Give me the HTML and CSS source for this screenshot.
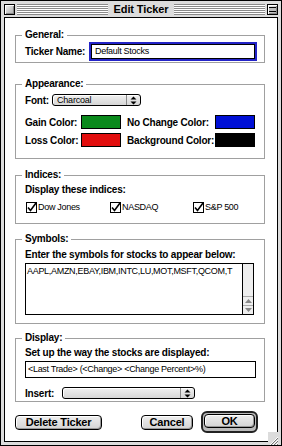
FILE: index.html
```html
<!DOCTYPE html>
<html lang="en">
  <head>
    <meta charset="UTF-8" />
    <title>Edit Ticker</title>
    <link rel="stylesheet" href="styles.css">
  </head>
  <body>
    <div class="window">
      <div class="titlebar">
        <span class="close-box"></span>
        <span class="stripes"></span>
        <span class="title">Edit Ticker</span>
        <span class="stripes"></span>
        <span class="shade-box"><span class="shade-bar"></span></span>
      </div>

      <div class="content">
        <!-- General -->
        <div class="group general">
          <span class="legend">General:</span>
          <div class="name-row">
            <span class="label">Ticker Name:</span>
            <div class="field focused">Default Stocks</div>
          </div>
        </div>

        <!-- Appearance -->
        <div class="group appearance">
          <span class="legend">Appearance:</span>
          <div class="font-row">
            <span class="label">Font:</span>
            <div class="popup font-popup">
              <span class="popup-text">Charcoal</span>
              <span class="popup-arrows">
                <svg width="7" height="9" viewBox="0 0 7 9"><path d="M0.5 3.5 L3.5 0.5 L6.5 3.5Z M0.5 5.5 L3.5 8.5 L6.5 5.5Z" fill="#000"/></svg>
              </span>
            </div>
          </div>
          <div class="color-grid">
            <span class="label">Gain Color:</span>
            <span class="swatch" style="background:#0a8a1c"></span>
            <span class="label">No Change Color:</span>
            <span class="swatch" style="background:#0010d6"></span>
            <span class="label">Loss Color:</span>
            <span class="swatch" style="background:#e20d0d"></span>
            <span class="label">Background Color:</span>
            <span class="swatch" style="background:#000"></span>
          </div>
        </div>

        <!-- Indices -->
        <div class="group indices">
          <span class="legend">Indices:</span>
          <div class="label line">Display these indices:</div>
          <div class="check-row">
            <span class="check"><svg width="11" height="11" viewBox="0 0 11 11"><rect x="0.5" y="0.5" width="10" height="10" fill="#fff" stroke="#000"/><path d="M2 5.5 L4.5 8.5 L10 1" fill="none" stroke="#000" stroke-width="1.6"/></svg>Dow Jones</span>
            <span class="check"><svg width="11" height="11" viewBox="0 0 11 11"><rect x="0.5" y="0.5" width="10" height="10" fill="#fff" stroke="#000"/><path d="M2 5.5 L4.5 8.5 L10 1" fill="none" stroke="#000" stroke-width="1.6"/></svg>NASDAQ</span>
            <span class="check"><svg width="11" height="11" viewBox="0 0 11 11"><rect x="0.5" y="0.5" width="10" height="10" fill="#fff" stroke="#000"/><path d="M2 5.5 L4.5 8.5 L10 1" fill="none" stroke="#000" stroke-width="1.6"/></svg>S&amp;P 500</span>
          </div>
        </div>

        <!-- Symbols -->
        <div class="group symbols">
          <span class="legend">Symbols:</span>
          <div class="label line">Enter the symbols for stocks to appear below:</div>
          <div class="text-area">
            <div class="text-body">AAPL,AMZN,EBAY,IBM,INTC,LU,MOT,MSFT,QCOM,T</div>
            <div class="scrollbar">
              <span class="track"></span>
              <span class="arrow"><svg width="7" height="4" viewBox="0 0 7 4"><path d="M0 4 L3.5 0 L7 4Z" fill="#888"/></svg></span>
              <span class="arrow"><svg width="7" height="4" viewBox="0 0 7 4"><path d="M0 0 L3.5 4 L7 0Z" fill="#888"/></svg></span>
            </div>
          </div>
        </div>

        <!-- Display -->
        <div class="group display">
          <span class="legend">Display:</span>
          <div class="label line">Set up the way the stocks are displayed:</div>
          <div class="field format">&lt;Last Trade&gt; (&lt;Change&gt; &lt;Change Percent&gt;%)</div>
          <div class="insert-row">
            <span class="label">Insert:</span>
            <div class="popup insert-popup">
              <span class="popup-text"></span>
              <span class="popup-arrows">
                <svg width="7" height="9" viewBox="0 0 7 9"><path d="M0.5 3.5 L3.5 0.5 L6.5 3.5Z M0.5 5.5 L3.5 8.5 L6.5 5.5Z" fill="#000"/></svg>
              </span>
            </div>
          </div>
        </div>

        <div class="button-row">
          <button class="btn delete-btn">Delete Ticker</button>
          <button class="btn cancel-btn">Cancel</button>
          <span class="default-ring"><button class="btn ok-btn">OK</button></span>
        </div>
      </div>

      <span class="grow-box">
        <svg width="11" height="11" viewBox="0 0 11 11">
          <path d="M2 10 L10 2 M5 10 L10 5 M8 10 L10 8" stroke="#fff" stroke-width="1"/>
          <path d="M3 10 L10 3 M6 10 L10 6 M9 10 L10 9" stroke="#777" stroke-width="1"/>
        </svg>
      </span>
    </div>
  </body>
</html>
```

FILE: styles.css
```css
body {
  margin: 0;
  padding: 0;
  background-color: #fff;
  font-family: "Liberation Sans", Arial, sans-serif;
  color: #000;
}

.window {
  position: relative;
  width: 282px;
  height: 446px;
  box-sizing: border-box;
  border: 1px solid #000;
  background-color: #dcdcdc;
  display: flex;
  flex-direction: column;
}

/* Title bar */
.titlebar {
  height: 16px;
  display: flex;
  align-items: center;
  padding: 0 3px;
}

.close-box,
.shade-box {
  width: 11px;
  height: 11px;
  box-sizing: border-box;
  border: 1px solid #000;
  background: linear-gradient(135deg, #f4f4f4, #aaa);
  box-shadow: inset 1px 1px #fff, inset -1px -1px #888;
  flex-shrink: 0;
}

.shade-box {
  display: flex;
  align-items: center;
  padding: 0 1px;
}

.shade-bar {
  display: block;
  width: 100%;
  height: 3px;
  border-top: 1px solid #000;
  border-bottom: 1px solid #000;
  background: #bbb;
}

.stripes {
  flex: 1;
  height: 11px;
  margin: 0 2px;
  background: repeating-linear-gradient(#8a8a8a 0 1px, #fff 1px 2px);
}

.title {
  font-size: 11px;
  font-weight: bold;
  letter-spacing: -0.1px;
  padding: 0 4px;
  line-height: 16px;
}

/* Content */
.content {
  flex: 1;
  margin: 0 3px 3px 3px;
  border: 1px solid #000;
  background-color: #fff;
}

.label {
  font-size: 10px;
  font-weight: bold;
  letter-spacing: -0.2px;
  white-space: nowrap;
}

.line {
  height: 12px;
  line-height: 12px;
}

.group {
  position: relative;
  margin: 0 12px 0 10px;
  border: 1px solid #a0a0a0;
}

.legend {
  position: absolute;
  top: -7px;
  left: 6px;
  padding: 0 3px;
  background-color: #fff;
  font-size: 10px;
  font-weight: bold;
  letter-spacing: -0.2px;
  line-height: 12px;
}

.field {
  box-sizing: border-box;
  border: 1px solid #000;
  font-size: 9px;
  letter-spacing: -0.3px;
  padding-left: 3px;
  white-space: nowrap;
}

/* General */
.general {
  margin-top: 17px;
  padding: 6px 7px 1px 9px;
}

.name-row {
  display: flex;
  align-items: center;
  justify-content: space-between;
}

.focused {
  width: 168px;
  height: 19px;
  line-height: 15px;
  border: 2px solid #2424c8;
  box-shadow: inset 0 0 0 1px #000;
  padding-left: 4px;
}

/* Appearance */
.appearance {
  margin-top: 21px;
  padding: 9px 0 11px 9px;
}

.font-row {
  display: flex;
  align-items: center;
  height: 12px;
  margin-bottom: 9px;
}

.popup {
  box-sizing: border-box;
  height: 12px;
  display: flex;
  border: 1px solid #000;
  border-radius: 3px;
  background: linear-gradient(#f0f0f0, #d6d6d6);
  box-shadow: inset 1px 1px #fff;
}

.font-popup {
  width: 89px;
  margin-left: 3px;
}

.popup-text {
  flex: 1;
  font-size: 9px;
  letter-spacing: -0.2px;
  line-height: 10px;
  padding-left: 4px;
}

.popup-arrows {
  width: 13px;
  border-left: 1px solid #888;
  display: flex;
  align-items: center;
  justify-content: center;
}

.color-grid {
  display: grid;
  grid-template-columns: 56px 46px 88px 40px;
  grid-auto-rows: 14px;
  row-gap: 4px;
  align-items: center;
}

.swatch {
  display: block;
  width: 40px;
  height: 14px;
  box-sizing: border-box;
  border: 1px solid #000;
}

/* Indices */
.indices {
  margin-top: 16px;
  padding: 8px 0 10px 9px;
}

.check-row {
  display: grid;
  grid-template-columns: 84px 83px auto;
  margin-top: 5px;
  padding-left: 1px;
  height: 12px;
  align-items: center;
}

.check {
  display: flex;
  align-items: center;
  gap: 1px;
  font-size: 9px;
  letter-spacing: -0.3px;
}

/* Symbols */
.symbols {
  margin-top: 15px;
  padding: 9px 0 8px 9px;
}

.text-area {
  display: flex;
  width: 229px;
  height: 52px;
  margin-top: 2px;
  box-sizing: border-box;
  border: 1px solid #000;
}

.text-body {
  flex: 1;
  font-size: 9px;
  letter-spacing: -0.3px;
  padding: 2px 0 0 1px;
  white-space: nowrap;
  overflow: hidden;
}

.scrollbar {
  width: 10px;
  border-left: 1px solid #000;
  display: flex;
  flex-direction: column;
  background-color: #eee;
}

.track {
  flex: 1;
}

.arrow {
  height: 8px;
  border-top: 1px solid #aaa;
  display: flex;
  align-items: center;
  justify-content: center;
}

/* Display */
.display {
  margin-top: 14px;
  padding: 8px 0 2px 9px;
}

.format {
  width: 231px;
  height: 17px;
  line-height: 15px;
  margin-top: 2px;
  padding-left: 2px;
}

.insert-row {
  display: flex;
  align-items: center;
  margin-top: 9px;
  height: 12px;
}

.insert-popup {
  width: 133px;
  margin-left: 8px;
}

/* Buttons */
.button-row {
  display: flex;
  align-items: center;
  height: 22px;
  margin: 9px 0 0 10px;
}

.btn {
  box-sizing: border-box;
  height: 15px;
  padding: 0;
  border: 1px solid #000;
  border-radius: 4px;
  background: linear-gradient(#eee, #d4d4d4);
  box-shadow: inset 1px 1px #fff, inset -1px -1px #999;
  font-family: "Liberation Sans", Arial, sans-serif;
  font-size: 11px;
  font-weight: bold;
  letter-spacing: -0.2px;
  line-height: 13px;
  color: #000;
}

.delete-btn {
  width: 87px;
}

.cancel-btn {
  width: 52px;
  margin-left: 39px;
}

.default-ring {
  display: flex;
  box-sizing: border-box;
  width: 57px;
  height: 22px;
  margin-left: 8px;
  padding: 1px;
  border: 2px solid #222;
  border-radius: 6px;
  background-color: #bbb;
}

.ok-btn {
  width: 100%;
  height: 14px;
}

.grow-box {
  position: absolute;
  right: 2px;
  bottom: 2px;
  width: 11px;
  height: 11px;
  background-color: #dcdcdc;
}
```
